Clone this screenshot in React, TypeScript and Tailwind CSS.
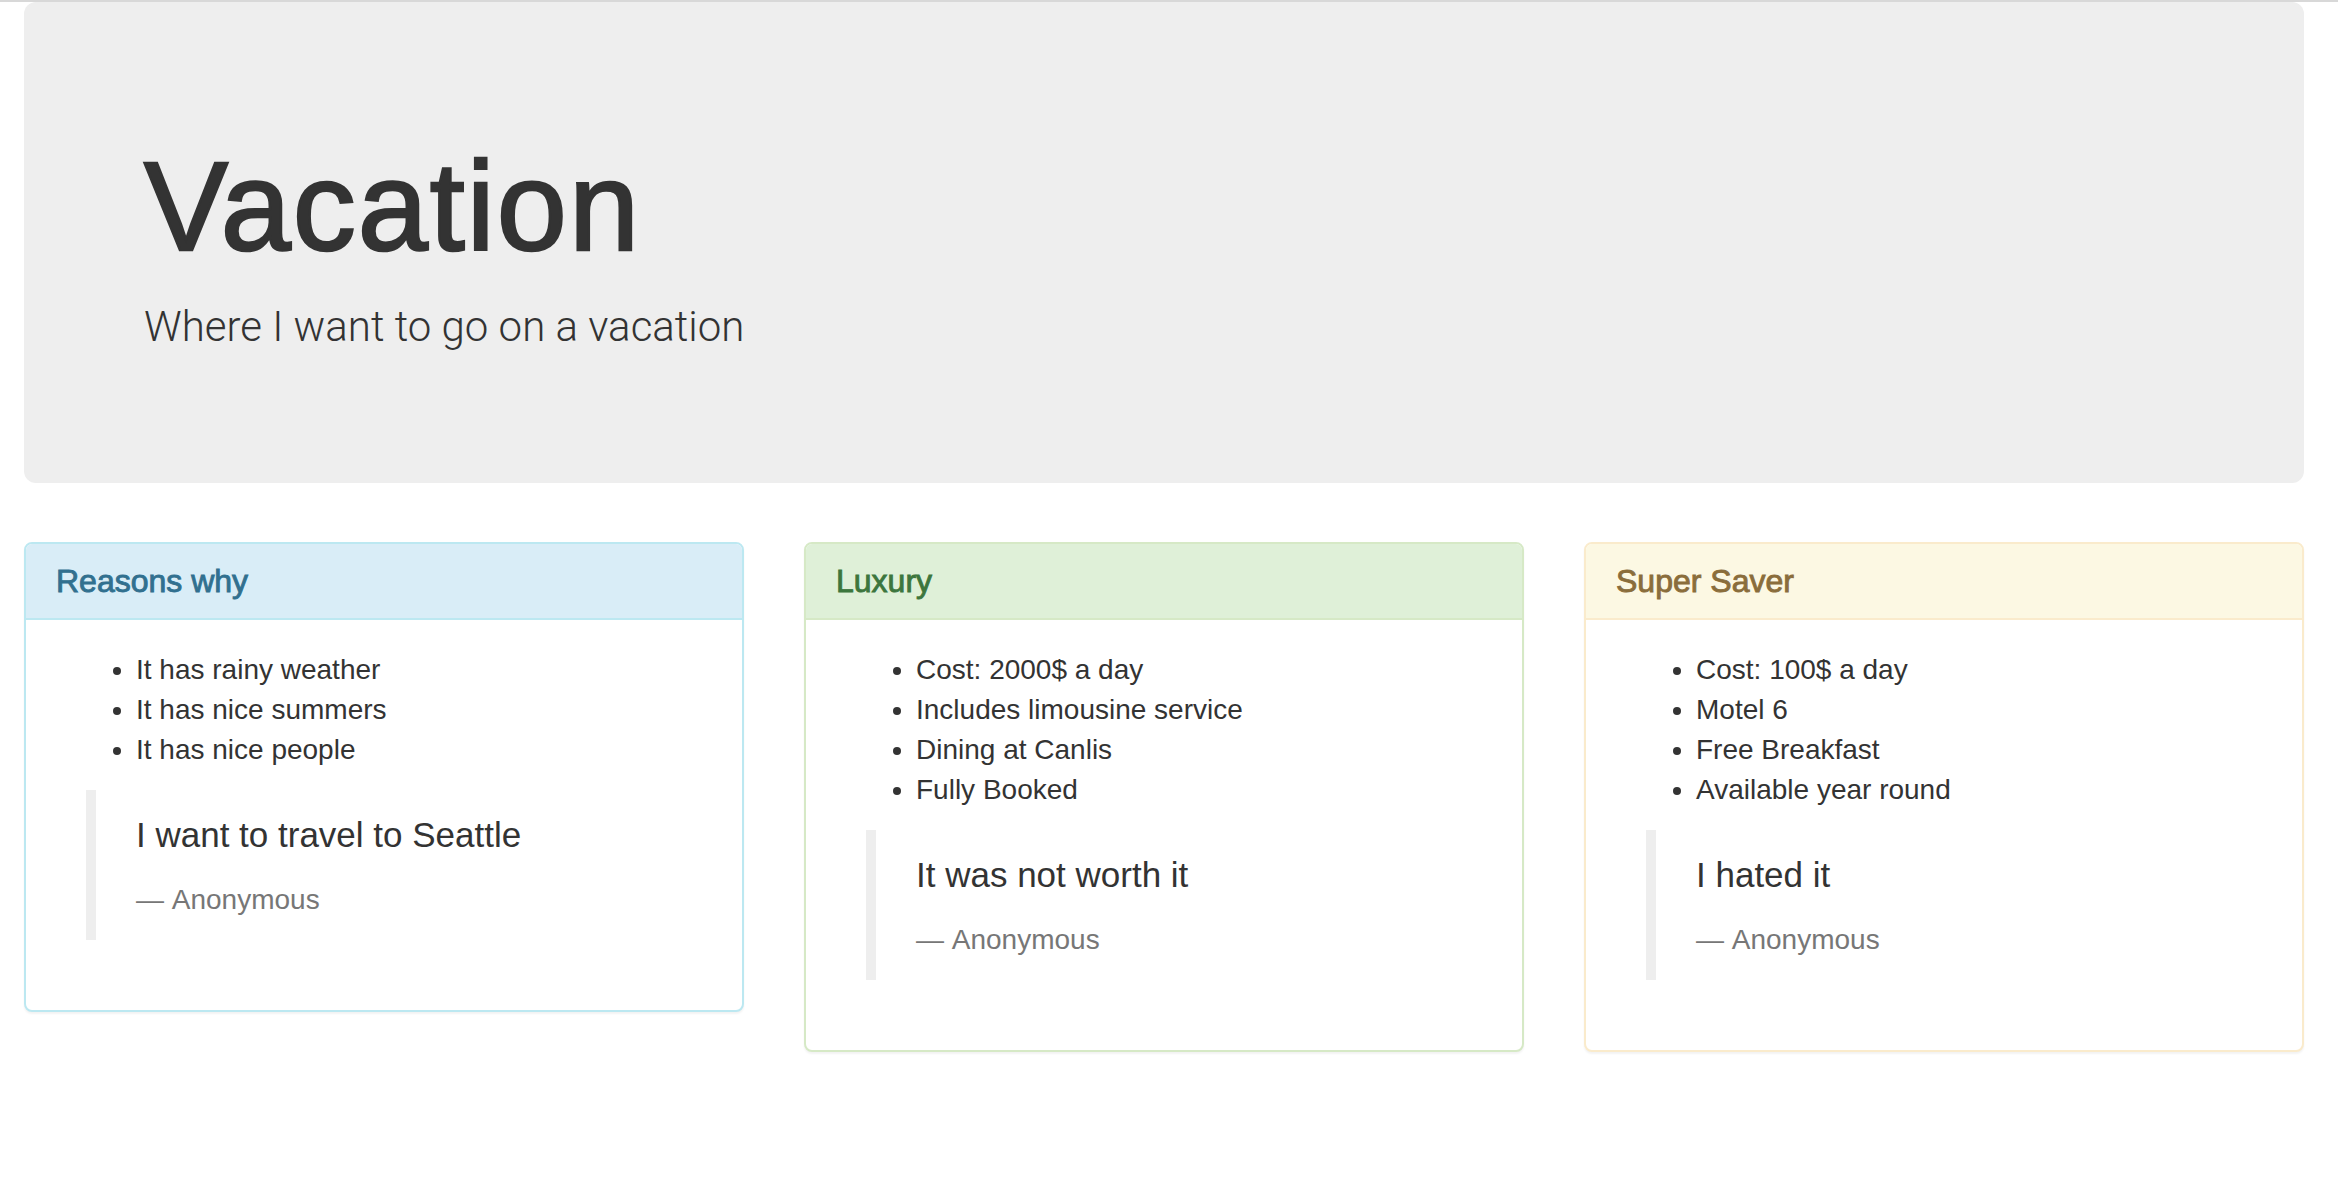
import React from "react";

type PanelProps = {
  title: string;
  items: string[];
  quote: string;
  border: string;
  headBg: string;
  headText: string;
};

function Panel({ title, items, quote, border, headBg, headText }: PanelProps) {
  return (
    <div className={`rounded-[8px] border-2 bg-white shadow-[0_2px_2px_rgba(0,0,0,0.05)] mb-[40px] ${border}`}>
      <div className={`rounded-t-[6px] border-b-2 px-[30px] pt-[20px] pb-[19px] ${border} ${headBg}`}>
        <h3 className={`text-[32px] leading-[1.1] font-normal [-webkit-text-stroke:0.9px] ${headText}`}>{title}</h3>
      </div>
      <div className="p-[30px]">
        <ul className="list-disc pl-[80px] mb-[20px] text-[28px] leading-[40px]">
          {items.map((it) => (
            <li key={it}>{it}</li>
          ))}
        </ul>
        <blockquote className="ml-[30px] mb-[40px] border-l-[10px] border-[#eeeeee] px-[40px] py-[20px]">
          <p className="mb-[20px] text-[35px] leading-[50px]">{quote}</p>
          <footer className="text-[28px] leading-[40px] text-[#777777]">—&nbsp;Anonymous</footer>
        </blockquote>
      </div>
    </div>
  );
}

export default function App() {
  return (
    <div className="min-h-screen bg-white text-[#333333] font-['Liberation_Sans',Arial,sans-serif]">
      <div className="h-[2px] bg-[#d8d8d8]" />
      <div className="mx-[24px] w-[2280px]">
        <div className="rounded-[12px] bg-[#eeeeee] px-[120px] pt-[96px] pb-[96px]">
          <h1 className="mt-[40px] mb-[20px] text-[126px] leading-[1.1] font-normal tracking-[2px] [-webkit-text-stroke:2.5px_#333333]">Vacation</h1>
          <p className="mb-[30px] text-[42px] leading-[60px] font-light font-['Roboto',sans-serif]">Where I want to go on a vacation</p>
        </div>
        <div className="mt-[59px] grid grid-cols-3 gap-[60px] items-start">
          <Panel
            title="Reasons why"
            items={["It has rainy weather", "It has nice summers", "It has nice people"]}
            quote="I want to travel to Seattle"
            border="border-[#bce8f1]"
            headBg="bg-[#d9edf7]"
            headText="text-[#31708f]"
          />
          <Panel
            title="Luxury"
            items={["Cost: 2000$ a day", "Includes limousine service", "Dining at Canlis", "Fully Booked"]}
            quote="It was not worth it"
            border="border-[#d6e9c6]"
            headBg="bg-[#dff0d8]"
            headText="text-[#3c763d]"
          />
          <Panel
            title="Super Saver"
            items={["Cost: 100$ a day", "Motel 6", "Free Breakfast", "Available year round"]}
            quote="I hated it"
            border="border-[#faebcc]"
            headBg="bg-[#fcf8e3]"
            headText="text-[#8a6d3b]"
          />
        </div>
      </div>
    </div>
  );
}
